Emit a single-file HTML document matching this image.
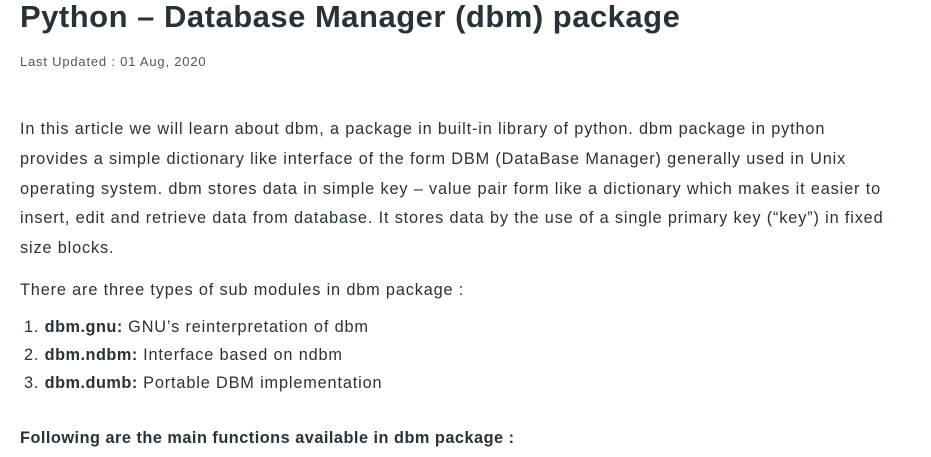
<!DOCTYPE html>
<html><head><meta charset="utf-8"><style>
body{margin:0;background:#fff;color:#273239;font-family:"Liberation Sans",sans-serif;width:931px;height:457px;overflow:hidden;position:relative}
.a{position:absolute;left:20px;white-space:nowrap}
h1{position:absolute;left:20px;top:-1px;margin:0;font-size:31px;font-weight:bold;letter-spacing:0.5px;white-space:nowrap}
.d{top:54px;font-size:13px;color:#555;letter-spacing:0.8px}
.p{font-size:16.3px;letter-spacing:0.85px}
b{font-weight:bold;letter-spacing:0.5px}
</style></head><body>
<h1>Python – Database Manager (dbm) package</h1>
<div class="a d">Last Updated : 01 Aug, 2020</div>
<div class="a p" style="top:120px">In this article we will learn about dbm, a package in built-in library of python. dbm package in python</div>
<div class="a p" style="top:150px">provides a simple dictionary like interface of the form DBM (DataBase Manager) generally used in Unix</div>
<div class="a p" style="top:180px">operating system. dbm stores data in simple key – value pair form like a dictionary which makes it easier to</div>
<div class="a p" style="top:209px">insert, edit and retrieve data from database. It stores data by the use of a single primary key (“key”) in fixed</div>
<div class="a p" style="top:239px">size blocks.</div>
<div class="a p" style="top:281px">There are three types of sub modules in dbm package :</div>
<div class="a p" style="top:318px;left:24px">1. <b>dbm.gnu:</b> GNU’s reinterpretation of dbm</div>
<div class="a p" style="top:346px;left:24px">2. <b>dbm.ndbm:</b> Interface based on ndbm</div>
<div class="a p" style="top:374px;left:24px">3. <b>dbm.dumb:</b> Portable DBM implementation</div>
<div class="a p" style="top:429px"><b>Following are the main functions available in dbm package :</b></div>
</body></html>
